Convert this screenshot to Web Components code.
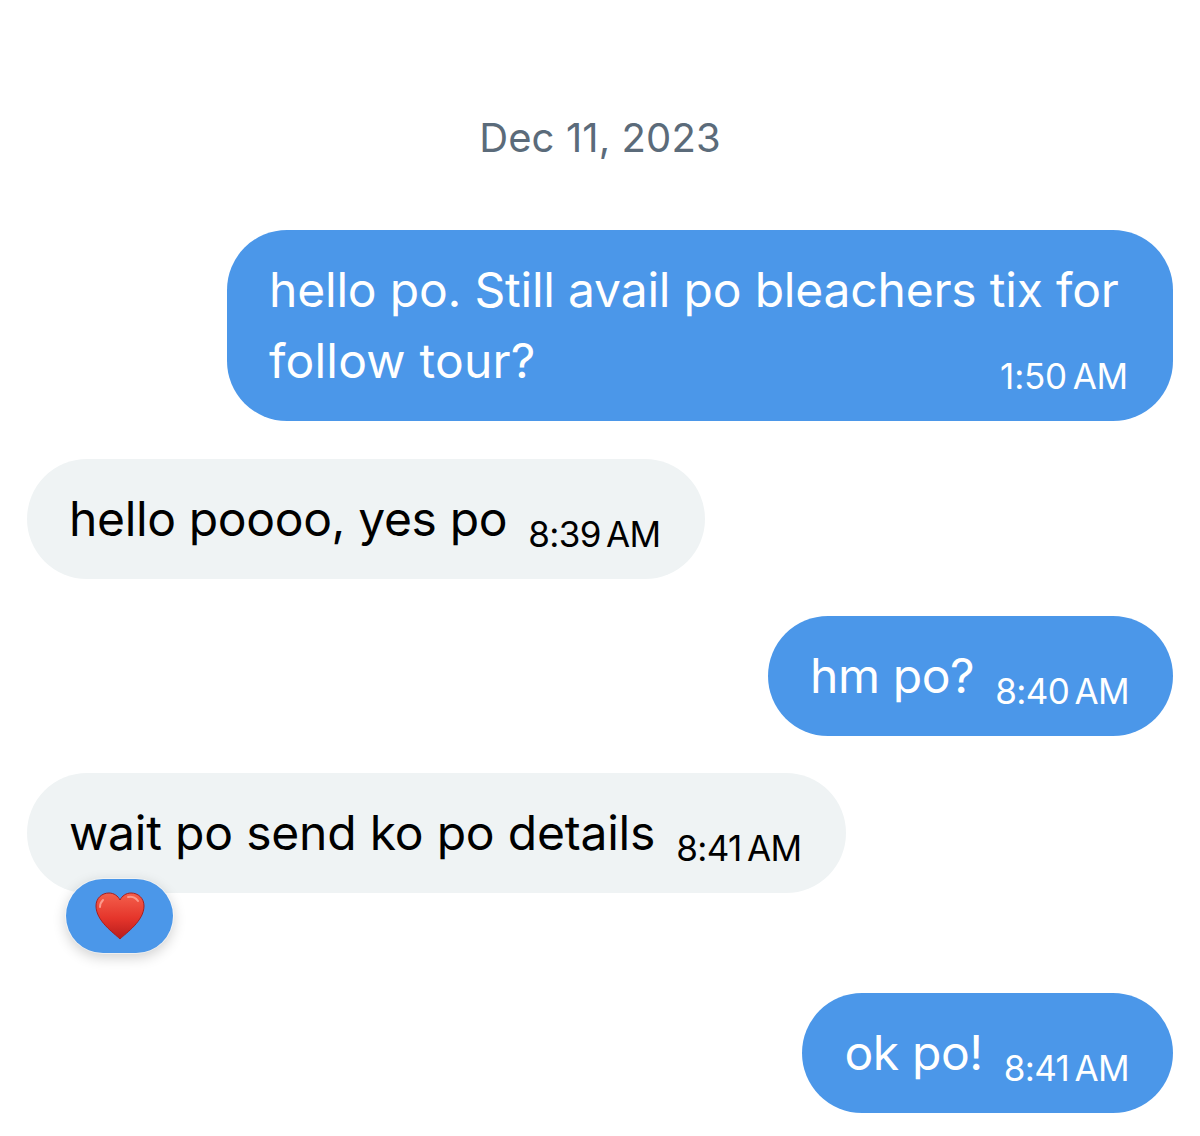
<!DOCTYPE html>
<html>
<head>
<meta charset="utf-8">
<style>
  html, body { margin: 0; background: #fff; }
  body { font-family: Inter, "Liberation Sans", sans-serif; }
</style>
</head>
<body>
<chat-thread>
  <chat-date>Dec 11, 2023</chat-date>
  <chat-bubble mine time="1:50 AM" wide style="--track:.2px"><span slot="lead" style="letter-spacing:-.2px">hello po. Still avail po bleachers tix for</span>follow tour?</chat-bubble>
  <chat-bubble time="8:39 AM" style="--track:-.35px">hello poooo, yes po</chat-bubble>
  <chat-bubble mine time="8:40 AM" style="--track:-.4px">hm po?</chat-bubble>
  <chat-bubble time="8:41 AM" heart>wait po send ko po details</chat-bubble>
  <chat-bubble mine time="8:41 AM" style="--track:-.4px">ok po!</chat-bubble>
</chat-thread>
<script>
class ChatThread extends HTMLElement {
  constructor() {
    super();
    this.attachShadow({ mode: 'open' }).innerHTML = `
      <style>
        :host { display: flex; flex-direction: column; gap: 37px; padding: 114px 27px 0; height: 1022px; overflow: hidden; }
      </style>
      <slot></slot>`;
  }
}

class ChatDate extends HTMLElement {
  constructor() {
    super();
    this.attachShadow({ mode: 'open' }).innerHTML = `
      <style>
        :host { display: block; text-align: center; color: #5b6b7a; font-size: 40px; line-height: 48px; margin-bottom: 31px; letter-spacing: 0.1px; }
      </style>
      <slot></slot>`;
  }
}

class ChatBubble extends HTMLElement {
  constructor() {
    super();
    const time = this.getAttribute('time');
    const heart = this.hasAttribute('heart') ? `
      <span class="reaction">
        <svg width="50" height="48" viewBox="0 0 50 48">
          <defs>
            <linearGradient id="h" x1="0" y1="0" x2="0" y2="1">
              <stop offset="0" stop-color="#f4604c"/>
              <stop offset=".55" stop-color="#e5352b"/>
              <stop offset="1" stop-color="#b71c1c"/>
            </linearGradient>
          </defs>
          <path d="M25 47C19 41 1 29 1 14 1 6 7 1 14 1c5 0 9 3 11 7 2-4 6-7 11-7 7 0 13 5 13 13 0 15-18 27-24 33z" fill="url(#h)" stroke="#a81e1e" stroke-width="1"/>
          <path d="M8 8c-2 2-3 4-3 7M33 5c4-1 8 1 10 4" stroke="#fb9a8c" stroke-width="2" fill="none" stroke-linecap="round"/>
        </svg>
      </span>` : '';
    this.attachShadow({ mode: 'open' }).innerHTML = `
      <style>
        :host { display: flex; justify-content: flex-start; }
        :host([mine]) { justify-content: flex-end; }
        :host([wide]) { margin-bottom: 1px; }
        :host([heart]) { margin-bottom: 63px; }
        .bubble { position: relative; box-sizing: border-box; min-height: 120px; padding: 24px 44px 24px 42px; border-radius: 60px; background: #eff3f4; color: #000; font-size: 48px; line-height: 72px; letter-spacing: var(--track, -0.2px); }
        :host([mine]) .bubble { background: #4b97e9; color: #fff; }
        :host([wide]) .bubble { width: 946px; }
        .lead { display: none; white-space: nowrap; }
        :host([wide]) .lead { display: block; margin-bottom: -1px; }
        .row { display: flex; align-items: flex-start; justify-content: space-between; gap: 21px; white-space: nowrap; }
        .time { font-size: 35px; line-height: 72px; margin: 15px 0 -15px; letter-spacing: -0.6px; word-spacing: -4px; }
        :host([wide]) .time { letter-spacing: -0.2px; margin-right: 1px; }
        .reaction { position: absolute; left: 39px; bottom: -60px; width: 107px; height: 74px; border-radius: 37px; background: #4b97e9; box-shadow: 0 0 0 1px rgba(255,255,255,.5), 0 4px 14px rgba(0,0,0,.2); display: flex; align-items: center; justify-content: center; }
        svg { display: block; }
      </style>
      <div class="bubble">
        <div class="lead"><slot name="lead"></slot></div>
        <div class="row"><span><slot></slot></span><span class="time">${time}</span></div>
        ${heart}
      </div>`;
  }
}

customElements.define('chat-thread', ChatThread);
customElements.define('chat-date', ChatDate);
customElements.define('chat-bubble', ChatBubble);
</script>
</body>
</html>
